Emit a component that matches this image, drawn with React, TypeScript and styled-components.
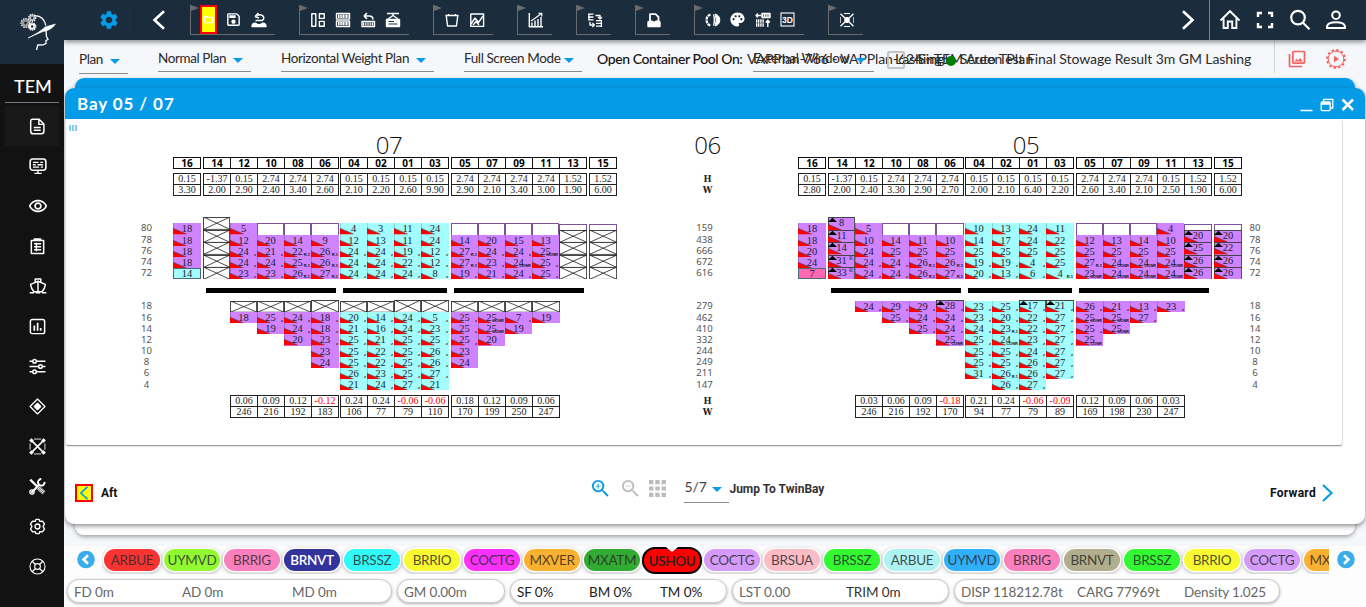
import React from "react";
import styled, { createGlobalStyle, css } from "styled-components";
import {
  MdSettings,
  MdPalette,
  MdFolderOpen,
  MdZoomIn,
  MdZoomOut,
  MdOutlineSave,
  MdOutlinePhotoLibrary,
  MdOutlineRemoveRedEye,
} from "react-icons/md";

const BLUE = "#059be7";
const NAVY = "#1b2c3d";
const VIOLET = "#cf83ff";
const AQUA = "#a3fdfd";
const PINK = "#ff69b4";

const Global = createGlobalStyle`
  html, body { margin: 0; padding: 0; overflow: hidden; background: #f5f7fa; }
  *, *::before, *::after { box-sizing: border-box; }
  svg { display: block; flex: none; }
`;

const Screen = styled.div`
  display: flex;
  width: 1366px;
  height: 607px;
  overflow: hidden;
  font-family: Lato, "Liberation Sans", sans-serif;
  color: #222;
`;

/* ---------- sidebar ---------- */

const Sidebar = styled.nav`
  width: 64px;
  flex: none;
  background: #121212;
  color: #fff;
  z-index: 3;
`;

const LogoBox = styled.div`
  height: 64px;
  background: ${NAVY};
`;

const ModuleName = styled.div`
  height: 39px;
  margin: 0 5px;
  padding: 11px 0 0 9px;
  border-bottom: 1px solid #6f7780;
  font: 500 18px/22px Lato, sans-serif;
`;

const SideItem = styled.div<{ $active?: boolean }>`
  display: flex;
  align-items: center;
  justify-content: center;
  height: 40px;
  margin: 0 5px;
  padding-left: 11px;
  background: ${(p) => (p.$active ? "#191919" : "transparent")};
`;

const SideList = styled.div`
  padding-top: 3px;
`;

/* ---------- top bar ---------- */

const Main = styled.div`
  display: flex;
  flex-direction: column;
  flex: 1;
  min-width: 0;
  background: #f5f7fa;
`;

const TopBar = styled.header`
  display: flex;
  align-items: center;
  height: 40px;
  flex: none;
  background: ${NAVY};
  color: #fff;
  box-shadow: 0 2px 5px rgba(0, 0, 0, 0.45);
  z-index: 2;
`;

const GearCell = styled.div`
  display: flex;
  justify-content: center;
  width: 70px;
  padding-left: 20px;
  height: 30px;
  align-items: center;
  border-right: 1px solid #182635;
  color: ${BLUE};
`;

const ChevronCell = styled.div<{ $w: number }>`
  display: flex;
  justify-content: center;
  width: ${(p) => p.$w}px;
`;

const Groups = styled.div`
  display: flex;
  gap: 24px;
  flex: 1;
  padding-left: 7px;
`;

const ToolGroup = styled.div`
  position: relative;
  display: flex;
  align-items: center;
  height: 30px;
  padding: 0 4px 0 5px;
  border-left: 1px solid #6b6b6b;
  border-bottom: 1px solid #6b6b6b;
`;

const Flag = styled.span`
  position: absolute;
  left: 0;
  top: 0;
  border-left: 8px solid #6b6b6b;
  border-top: 3px solid transparent;
  border-bottom: 3px solid transparent;
`;

const Tool = styled.div<{ $hot?: boolean }>`
  display: flex;
  align-items: center;
  justify-content: center;
  width: 25px;
  height: 28px;
  ${(p) =>
    p.$hot &&
    css`
      width: 17px;
      height: 29px;
      margin: 0 4px;
      border: 2px solid red;
      background: #ff0;
      overflow: hidden;
    `}
`;

const UserTools = styled.div`
  display: flex;
  align-items: center;
  width: 157px;
  height: 40px;
  gap: 13px;
  padding-left: 9px;
  border-left: 1px solid #7b838b;
`;

/* ---------- options bar ---------- */

const Options = styled.div`
  position: relative;
  display: flex;
  height: 38px;
  flex: none;
  padding: 0 15px;
  gap: 30px;
  color: #222;
`;

const Select = styled.div<{ $w: number; $y?: number }>`
  display: flex;
  justify-content: space-between;
  align-items: center;
  width: ${(p) => p.$w}px;
  height: ${(p) => 32 + (p.$y || 0)}px;
  padding: 4px 8px 0 0;
  border-bottom: 1px solid #8a8a8a;
  font-size: 13.5px;
  letter-spacing: -0.4px;
  white-space: nowrap;
  color: #2b2b2b;
`;

const Caret = styled.i`
  margin-top: 6px;
  border: 5px solid transparent;
  border-top-color: ${BLUE};
  border-bottom: 0;
`;

const Overlay = styled.div<{ $x: number; $y: number; $ls?: number; $bold?: boolean }>`
  position: absolute;
  left: ${(p) => p.$x - 64}px;
  top: ${(p) => p.$y - 40}px;
  font-size: 14px;
  line-height: 18px;
  white-space: nowrap;
  color: ${(p) => (p.$bold ? "#111" : "#2b2b2b")};
  font-weight: ${(p) => (p.$bold ? 500 : 400)};
  letter-spacing: ${(p) => p.$ls || 0}px;
`;

const CheckBox = styled.span`
  display: block;
  width: 18px;
  height: 18px;
  border: 2px solid #c4c4c4;
  border-radius: 2px;
`;

const Dot = styled.span`
  display: block;
  width: 10px;
  height: 10px;
  border-radius: 50%;
  background: #008000;
`;

const OptionTools = styled.div`
  position: absolute;
  right: 19px;
  top: 1px;
  display: flex;
  align-items: center;
  height: 32px;
  gap: 19px;
  padding: 3px 1px 0 12px;
  border-left: 1px solid #d4d4d4;
  color: #f5625d;
`;

/* ---------- window ---------- */

const BackWindow = styled.section`
  height: 457px;
  flex: none;
  margin: 0 11px;
  padding-top: 10px;
  border-radius: 9px;
  background: linear-gradient(${BLUE} 40px, #fff 40px);
  box-shadow: 0 2px 4px rgba(0, 0, 0, 0.35);
`;

const FrontWindow = styled.section`
  height: 436px;
  margin: 0 -10px;
  border-radius: 9px;
  background: #fff;
  box-shadow: 0 2px 5px rgba(0, 0, 0, 0.45);
  overflow: hidden;
`;

const TitleBar = styled.div`
  display: flex;
  align-items: center;
  height: 31px;
  padding: 1px 10px 0 12px;
  background: ${BLUE};
  color: #fff;
`;

const Title = styled.h1`
  flex: 1;
  margin: 0;
  font: 700 17px/22px Lato, sans-serif;
  letter-spacing: 0.9px;
`;

const WindowButtons = styled.div`
  display: flex;
  align-items: center;
  gap: 7px;
  padding-top: 2px;
`;

const PlanCard = styled.div`
  position: relative;
  display: flex;
  width: 1278px;
  height: 327px;
  border: 1px solid #e0e0e0;
  border-top: 0;
  border-bottom: 1px solid #9e9e9e;
  border-radius: 4px;
  box-shadow: 0 1px 1px rgba(0, 0, 0, 0.12);
`;

const Grip = styled.svg`
  position: absolute;
  left: 3px;
  top: 6px;
`;

const Tiers = styled.div<{ $w: number; $pl?: number; $pt?: number }>`
  width: ${(p) => p.$w}px;
  padding-left: ${(p) => p.$pl || 0}px;
  padding-top: ${(p) => p.$pt ?? 103.4}px;
  text-align: center;
  font: 400 9.6px/11.2px "Noto Sans", sans-serif;
  color: #555;
`;

const TierBlock = styled.div<{ $gap?: number }>`
  margin-top: ${(p) => p.$gap || 0}px;
  div {
    height: 11.2px;
  }
`;

const Middle = styled.div`
  position: relative;
  width: 181px;
`;

const MidLabel = styled.div<{ $y: number }>`
  position: absolute;
  left: 0;
  width: 100%;
  top: ${(p) => p.$y - 119}px;
  text-align: center;
  font: 700 9.5px/12px "DejaVu Serif Condensed", "DejaVu Serif", serif;
  color: #222;
`;

const BayTitle = styled.div<{ $dx?: number }>`
  height: 38px;
  padding-top: 10px;
  text-align: center;
  transform: translateX(${(p) => p.$dx || 0}px);
  font: 300 24px/32px "Open Sans", "Noto Sans", sans-serif;
  letter-spacing: -0.4px;
  color: #111;
`;

const Bay = styled.div`
  width: 444px;
`;

const Strip = styled.div<{ $mt?: number }>`
  display: flex;
  margin-top: ${(p) => p.$mt || 0}px;
`;

const Block = styled.div<{ $ml: number }>`
  display: flex;
  align-items: flex-end;
  margin-left: ${(p) => p.$ml}px;
`;

const HeadCell = styled.div<{ $last: boolean }>`
  width: ${(p) => (p.$last ? 28 : 27)}px;
  height: 12px;
  border: 1px solid #111;
  border-right-width: ${(p) => (p.$last ? 1 : 0)}px;
  text-align: center;
  font: 700 10px/10px "Noto Sans", sans-serif;
  color: #000;
`;

const ValCell = styled.div<{ $last: boolean; $red?: boolean; $bottom?: boolean }>`
  width: ${(p) => (p.$last ? 28 : 27)}px;
  height: ${(p) => (p.$bottom ? 12 : 11)}px;
  border: 1px solid #222;
  border-bottom-width: ${(p) => (p.$bottom ? 1 : 0)}px;
  border-right-width: ${(p) => (p.$last ? 1 : 0)}px;
  text-align: center;
  font: 400 10px/9.5px "Liberation Serif", serif;
  color: ${(p) => (p.$red ? "#f00" : "#222")};
`;

const Stack = styled.div<{ $last: boolean; $h: number; $up?: boolean; $lift?: boolean }>`
  display: flex;
  flex-direction: column;
  justify-content: ${(p) => (p.$up ? "flex-end" : "flex-start")};
  width: ${(p) => (p.$last ? 28 : 27)}px;
  height: ${(p) => p.$h + (p.$lift ? 1.2 : 0)}px;
  margin-top: ${(p) => (p.$lift ? -1.2 : 0)}px;
`;

type Kind = "box" | "open" | "cross" | "plain";

const Slot = styled.div<{ $h: number; $bg: string; $line: string; $tall: boolean; $kind: Kind }>`
  position: relative;
  height: ${(p) => p.$h}px;
  flex: none;
  background: ${(p) => p.$bg};
  box-shadow: ${(p) =>
    p.$tall
      ? "inset 1px 0 #444, inset 0 1px #444, inset -1px 0 #555"
      : p.$kind === "open"
        ? "inset 0 1px #7c529b, inset 1px 0 #7c529b, inset -1px 0 #7c529b"
        : p.$kind === "plain"
          ? "inset 0 0 0 1px #4b6c7c"
          : `inset 1px 0 ${p.$line}`};
  text-align: center;
  font: 400 10.5px/11px "Liberation Serif", serif;
  color: #1c1c2c;
`;

const Mark = styled.svg`
  position: absolute;
  left: 0;
  bottom: 0;
`;

const Num = styled.span`
  position: relative;
`;

const Note = styled.span`
  position: absolute;
  right: 1px;
  bottom: 0;
  font: 700 4px/5px "Liberation Sans", sans-serif;
  color: #111;
`;

const Flagged = styled.span`
  position: absolute;
  right: 2px;
  top: 0;
  font: 400 6px/7px "Liberation Serif", serif;
  color: #333;
`;

const Hatches = styled.div`
  display: flex;
  height: 5px;
  margin-top: 9px;
  padding-left: 33px;
`;

const Hatch = styled.div<{ $w: number; $mr?: number }>`
  width: ${(p) => p.$w}px;
  margin-right: ${(p) => p.$mr || 0}px;
  background: #000;
`;

const notes: Record<string, string> = { z: "z", r: "R.1", c: "CONR" };

function Container({ code, bay }: { code: string; bay: string }) {
  const tall = /^\^|^T/.test(code);
  const h = tall ? 12.4 : 11.2;
  const colour = bay === "v" ? VIOLET : AQUA;
  const line = bay === "v" ? "#a76cd0" : "#83d3d8";
  if (code === "h")
    return <Slot $h={6.2} $bg="#fff" $line={line} $tall={false} $kind="open" />;
  if (code === "-")
    return <Slot $h={11.2} $bg="#fff" $line={line} $tall={false} $kind="open" />;
  if (code === "X" || code === "TX")
    return (
      <Slot $h={h} $bg="#fff" $line="#333" $tall $kind="cross">
        <Mark width="100%" height="100%" viewBox="0 0 27 12" preserveAspectRatio="none">
          <path d="M0.5 0L27 12M27 0L0.5 12M0 12H27" stroke="#222" strokeWidth="0.8" fill="none" />
        </Mark>
      </Slot>
    );
  if (code[0] === "=" || code[0] === "#")
    return (
      <Slot $h={h} $bg={code[0] === "=" ? AQUA : PINK} $line={line} $tall={false} $kind="plain">
        <Num>{code.slice(1)}</Num>
      </Slot>
    );
  const m = code.match(/^(\^?)(\d+)([zrcR]?)$/)!;
  return (
    <Slot $h={h} $bg={colour} $line={line} $tall={tall} $kind="box">
      <Mark width="15" height="6.2" viewBox="0 0 15 6.2">
        <path d="M0 0.5L13.6 6.2H0Z" fill="#f00" />
        <path d="M0 0.3L13.6 6" stroke="#222" strokeWidth="0.5" />
      </Mark>
      {tall && (
        <Mark width="10" height="12.4" viewBox="0 0 10 12.4">
          <path d="M0 5L4.5 0.8L9 5Z" fill="#000" />
        </Mark>
      )}
      <Num>{m[2]}</Num>
      {m[3] === "R" && <Flagged>R</Flagged>}
      {notes[m[3]] && <Note>{notes[m[3]]}</Note>}
    </Slot>
  );
}

interface BayData {
  title: string;
  dx: number;
  h: string;
  w: string;
  deck: string[];
  hold: string[];
  holdH: string;
  holdW: string;
}

const HEADS = "16|14 12 10 08 06|04 02 01 03|05 07 09 11 13|15";
const GAPS = [0, 2, 1, 2, 2];
const HOLD_GAPS = [57, 1, 2];

const split = (s: string) => s.split("|").map((g) => g.trim().split(" "));

const isAlert = (v: string, gaps: number[]) => gaps === HOLD_GAPS && v[0] === "-";

function Values({ data, gaps, bottom, mt }: { data: string; gaps: number[]; bottom?: boolean; mt?: number }) {
  return (
    <Strip $mt={mt}>
      {split(data).map((g, i) => (
        <Block key={i} $ml={gaps[i]}>
          {g.map((v, j) => (
            <ValCell key={j} $last={j === g.length - 1} $bottom={bottom} $red={isAlert(v, gaps)}>
              {v}
            </ValCell>
          ))}
        </Block>
      ))}
    </Strip>
  );
}

function Stacks({ groups, gaps, h, up, mt }: { groups: string[]; gaps: number[]; h: number; up?: boolean; mt?: number }) {
  return (
    <Strip $mt={mt}>
      {groups.map((g, i) => {
        const cols = g.split("|");
        const tone = (up ? i === 2 : i === 1) ? "a" : "v";
        return (
          <Block key={i} $ml={gaps[i]}>
            {cols.map((c, j) => (
              <Stack key={j} $last={j === cols.length - 1} $h={h} $up={up} $lift={!up && /^[T^]/.test(c)}>
                {c.split(" ").map((code, k) => (
                  <Container key={k} code={code} bay={tone} />
                ))}
              </Stack>
            ))}
          </Block>
        );
      })}
    </Strip>
  );
}

function BayPlan({ d }: { d: BayData }) {
  return (
    <Bay>
      <BayTitle $dx={d.dx}>{d.title}</BayTitle>
      <Strip>
        {split(HEADS).map((g, i) => (
          <Block key={i} $ml={GAPS[i]}>
            {g.map((v, j) => (
              <HeadCell key={j} $last={j === g.length - 1}>
                {v}
              </HeadCell>
            ))}
          </Block>
        ))}
      </Strip>
      <Values data={d.h} gaps={GAPS} mt={4} />
      <Values data={d.w} gaps={GAPS} bottom />
      <Stacks groups={d.deck} gaps={GAPS} h={62} up mt={21.4} />
      <Hatches>
        <Hatch $w={130} $mr={7} />
        <Hatch $w={104} $mr={7} />
        <Hatch $w={130} />
      </Hatches>
      <Stacks groups={d.hold} gaps={HOLD_GAPS} h={94.2} mt={7.4} />
      <Values data={d.holdH} gaps={HOLD_GAPS} />
      <Values data={d.holdW} gaps={HOLD_GAPS} bottom />
    </Bay>
  );
}

const bay07: BayData = {
  title: "07",
  dx: -6,
  h: "0.15|-1.37 0.15 2.74 2.74 2.74|0.15 0.15 0.15 0.15|2.74 2.74 2.74 2.74 1.52|1.52",
  w: "3.30|2.00 2.90 2.40 3.40 2.60|2.10 2.20 2.60 9.90|2.90 2.10 3.40 3.00 1.90|6.00",
  deck: [
    "18 18 18 18 =14",
    "TX TX TX TX TX|5 12 24z 24z 23z|- 20 21z 24z 23z|- 14 22r 25r 26r|- 9 26r 26r 27r",
    "4 12 24z 24z 24z|3 13 24z 24z 24z|11 11 19z 22z 24z|24 24 12z 12z 8z",
    "- 14 27r 27r 19z|- 20 24z 23z 21z|- 15 24z 24c 24z|- 13 25c 25z 25z|h TX TX TX TX",
    "h TX TX TX TX",
  ],
  hold: [
    "X 18|X 25z 19|X 24z 24z 20|TX 18z 18z 23z 23 24",
    "X 20z 21z 25z 25z 25z 26z 21|X 14z 16z 21z 22z 22z 23z 24z|TX 24z 24z 25z 25z 25z 25z 27z|TX 5z 23z 25z 26z 26z 27z 21",
    "X 25z 25z 25z 23 24|X 25c 25c 20|X 7z 19|X 19",
  ],
  holdH: "0.06 0.09 0.12 -0.12|0.24 0.24 -0.06 -0.06|0.18 0.12 0.09 0.06",
  holdW: "246 216 192 183|106 77 79 110|170 199 250 247",
};

const bay05: BayData = {
  title: "05",
  dx: 6,
  h: "0.15|-1.37 0.15 2.74 2.74 2.74|0.15 0.15 0.15 0.15|2.74 2.74 2.74 0.15 1.52|1.52",
  w: "2.80|2.00 2.40 3.30 2.90 2.70|2.00 2.10 6.40 2.20|2.60 3.40 2.10 2.50 1.90|6.00",
  deck: [
    "18 18 20 24 #7",
    "^8 ^11 ^14 ^31R ^33R|5 10 24 24z 24z|- 14 25 24z 24z|- 11 25 26r 26r|- 10 25 26r 27r",
    "10 14 25 19z 20z|13 17 25 19z 13z|24 24 25 4z 6z|11 22 25 25 4r",
    "- 12 25 27r 23c|- 13 25 24c 24c|- 14 25 24c 24c|4 10 25 24c 24c|h ^20 ^25 ^26 ^26",
    "h ^20 ^22 ^26 ^26",
  ],
  hold: [
    "24z|29z 25z|29z 24z 25z|^28z 24z 24z 25c",
    "23z 23z 24z 25z 25z 25z 31z|25z 20z 23r 24c 25z 25z 26r 26z|^17z 22z 22z 23z 24z 26z 26z 27z|^21z 27z 27z 27z 27z 27z 27z",
    "26z 25c 25z 25c|21z 25c 25c|13z 27z|23z",
  ],
  holdH: "0.03 0.06 0.09 -0.18|0.21 0.24 -0.06 -0.09|0.12 0.09 0.06 0.03",
  holdW: "246 216 192 170|94 77 79 89|169 198 230 247",
};

const DECK_TIERS = [80, 78, 76, 74, 72];
const HOLD_TIERS = [18, 16, 14, 12, 10, 8, 6, 4];

function TierScale({ deck, hold }: { deck: number[]; hold: number[] }) {
  return (
    <>
      <TierBlock>{deck.map((t) => <div key={t}>{t}</div>)}</TierBlock>
      <TierBlock $gap={22}>{hold.map((t) => <div key={t}>{t}</div>)}</TierBlock>
    </>
  );
}

/* ---------- window footer ---------- */

const Footer = styled.div`
  display: flex;
  align-items: center;
  height: 78px;
  padding: 15px 31px 0 10px;
  font: 700 12px/16px Roboto, sans-serif;
  color: #111;
`;

const AftButton = styled.div`
  display: flex;
  align-items: center;
  justify-content: center;
  width: 18px;
  height: 18px;
  margin: 0 8px 0 0;
  border: 2px solid red;
  background: #ff0;
`;

const ZoomTools = styled.div`
  display: flex;
  align-items: center;
  gap: 7px;
  height: 40px;
  margin: -9px 0 0 472px;
  color: #bdbdbd;
`;

const PageSelect = styled.div`
  display: flex;
  align-items: center;
  justify-content: space-between;
  width: 45px;
  height: 28px;
  margin: -7px 0 0 18px;
  padding: 0 7px 4px 0;
  border-bottom: 1px solid #8a8a8a;
  font: 400 14px/20px Lato, sans-serif;
  color: #444;
`;

const Jump = styled.div`
  flex: 1;
  padding-bottom: 7px;
  color: #333;
`;

const Forward = styled.div`
  display: flex;
  align-items: center;
  gap: 5px;
  letter-spacing: 0.3px;
`;

/* ---------- ports and status ---------- */

const Bottom = styled.footer`
  flex: 1;
  margin-top: 11px;
  padding-left: 3px;
  background: #fdfdfe;
`;

const Ports = styled.div`
  display: flex;
  align-items: center;
  height: 28px;
  padding: 0 11px 0 10px;
`;

const PortTrack = styled.div`
  display: flex;
  align-items: center;
  gap: 4px;
  width: 1228px;
  height: 28px;
  margin: 0 8px 0 7px;
  padding-left: 2px;
  overflow: hidden;
`;

const Port = styled.div<{ $c: string; $fg?: string; $sel?: boolean }>`
  position: relative;
  flex: none;
  width: 56px;
  height: 22px;
  border-radius: 11px;
  background: ${(p) => p.$c};
  color: ${(p) => p.$fg || "rgba(40,40,40,.82)"};
  box-shadow: 0 0 0 1.5px #fff, 0 1px 4px 1px rgba(0, 0, 0, 0.35);
  font: ${(p) => (p.$fg ? 600 : 400)} 13.5px/23px Lato, sans-serif;
  letter-spacing: -0.3px;
  text-align: center;
  ${(p) =>
    p.$sel &&
    css`
      width: 60px;
      height: 27px;
      margin: 0 -2px;
      border: 2px solid #000;
      border-radius: 13px;
      line-height: 25px;
      box-shadow: none;
    `}
`;

const Notch = styled.span`
  position: absolute;
  left: 22px;
  top: -2px;
  border: 6px solid transparent;
  border-top: 5px solid #fff;
  border-bottom: 0;
`;

const Status = styled.div`
  display: flex;
  gap: 5px;
  margin-top: 5px;
`;

const StatusBox = styled.div<{ $w: number; $dark?: boolean }>`
  display: flex;
  width: ${(p) => p.$w}px;
  height: 24px;
  padding-left: 6px;
  border: 1px solid #ccc;
  border-radius: 12px;
  background: #fff;
  box-shadow: 0 1px 3px rgba(0, 0, 0, 0.3);
  font-size: 13.5px;
  line-height: 24px;
  letter-spacing: -0.1px;
  white-space: nowrap;
  color: ${(p) => (p.$dark ? "#222" : "#666")};
`;

const Stat = styled.span<{ $w: number; $dark?: boolean }>`
  width: ${(p) => p.$w}px;
  flex: none;
  ${(p) => p.$dark && "color:#333;"}
`;

const ports: [string, string, string?][] = [
  ["ARBUE", "#f93232"],
  ["UYMVD", "#92f932"],
  ["BRRIG", "#f97fbd"],
  ["BRNVT", "#33339b", "#fff"],
  ["BRSSZ", "#32f9f9"],
  ["BRRIO", "#f9f932"],
  ["COCTG", "#f932f9"],
  ["MXVER", "#f9b132"],
  ["MXATM", "#32ab32"],
  ["USHOU", "#f00", "#222"],
  ["COCTG", "#d49bfb"],
  ["BRSUA", "#fabdc8"],
  ["BRSSZ", "#32f932"],
  ["ARBUE", "#aef2f2"],
  ["UYMVD", "#32aff9"],
  ["BRRIG", "#f97fbd"],
  ["BRNVT", "#b0ae8c"],
  ["BRSSZ", "#32f932"],
  ["BRRIO", "#f9f932"],
  ["COCTG", "#d49bfb"],
  ["MXVER", "#f9b132"],
];

/* ---------- drawings ---------- */

const Ic = ({ s = 16, w = 1.4, children }: { s?: number; w?: number; children: React.ReactNode }) => (
  <svg width={s} height={s} viewBox="0 0 16 16" fill="none" stroke="currentColor" strokeWidth={w} strokeLinejoin="round">
    {children}
  </svg>
);

const Chevron = ({ d, w = 14, h = 20, c = "#fff", sw = 2.6 }: { d: "l" | "r"; w?: number; h?: number; c?: string; sw?: number }) => (
  <svg width={w} height={h} viewBox="0 0 14 20" fill="none" stroke={c} strokeWidth={sw}>
    <path d={d === "l" ? "M12 1.2L2.5 10L12 18.8" : "M2 1.2L11.5 10L2 18.8"} />
  </svg>
);

const Logo = () => (
  <svg width="64" height="64" viewBox="0 0 64 64" fill="none" stroke="#fff">
    <circle cx="25.5" cy="23" r="2.6" strokeWidth="2.4" stroke="#999" />
    <circle cx="25.5" cy="23" r="4.4" strokeWidth="1.2" strokeDasharray="1.6 .9" />
    <circle cx="32.2" cy="17.8" r="2.2" strokeWidth="2" stroke="#bbb" />
    <circle cx="32.2" cy="17.8" r="3.6" strokeWidth="1.1" strokeDasharray="1.4 .9" />
    <circle cx="32.2" cy="26.5" r="2.3" strokeWidth="2" />
    <circle cx="32.2" cy="26.5" r="3.7" strokeWidth="1.1" strokeDasharray="1.4 .9" />
    <path d="M35 15.6C40.5 15.8 44.5 19 45.8 25.5" strokeWidth="1.3" />
    <path d="M28 38C36 34 41 31 45 27L55.5 24Q51 30.5 43 31.5Q36 34.5 28 38Z" fill="#fff" strokeWidth=".6" />
    <path d="M46 31L46.5 36.5L48 39.5L46 40.5V43.5L43 44.8L37.8 45L36.5 50" strokeWidth="1.3" />
  </svg>
);

const sideIcons: React.ReactNode[] = [
  <Ic s={17} key="doc"><path d="M3.5 1.2H9.5L14 5.7V12.5Q14 14.8 11.7 14.8H3.8Q1.6 14.8 1.6 12.5V3.2Q1.6 1.2 3.5 1.2ZM9.3 1.2V6H14M4.5 9H11M4.5 11.6H11" /></Ic>,
  <Ic s={18} key="mon"><rect x="1" y="1.8" width="14" height="10" rx="2.4" /><path d="M3.5 4.8H8.5M10 4.8H12.5M3.5 6.9H6M7.5 6.9H12.5M3.5 9H9M10.5 9H12.5M8 12V14.5M4.8 14.6H11.2" strokeWidth="1.2" /></Ic>,
  <MdOutlineRemoveRedEye key="eye" size={20} />,
  <Ic s={17} key="clip"><path d="M2.2 2.4H13.8V14.6H2.2ZM5 2V1H11V2M4.8 5.5H11.5M4.8 8.3H11.5M4.8 11.1H11.5M7 4.5V12.5" /></Ic>,
  <Ic s={18} key="ship"><path d="M8 3.8L14.6 6.6Q14 11 11.5 13.2H4.5Q2 11 1.4 6.6ZM8 3.8V13M5.5 4.5V1.8H10.5V4.5M0.6 14H4.5M6 14H10M11.5 14H15.4" strokeWidth="1.3" /></Ic>,
  <Ic s={17} key="chart"><rect x="1.3" y="1.3" width="13.4" height="13.4" rx="1.8" /><path d="M5 12V7M8.1 12V4.5M11 12V9.5" strokeWidth="1.6" /></Ic>,
  <Ic s={17} key="sl"><path d="M0.5 3H3.5M7 3H15.5M0.5 8H9M12.6 8H15.5M0.5 13H3.5M7 13H15.5" /><circle cx="5.2" cy="3" r="1.7" /><circle cx="10.8" cy="8" r="1.7" /><circle cx="5.2" cy="13" r="1.7" /></Ic>,
  <Ic s={17} key="dia" w={1.2}><path d="M8 1L15 8L8 15L1 8Z" /><path d="M8 5L11 8L8 11L5 8Z" fill="currentColor" /></Ic>,
  <Ic s={17} key="x"><path d="M1.5 1.5L14.5 14.5M14.5 1.5L1.5 14.5" strokeWidth="1.5" /><path d="M4.5 1H11.5M4.5 15H11.5M1 5V11M15 5V11" strokeWidth="0.8" /><path d="M1.2 1.2L3.4 3.4M14.8 1.2L12.6 3.4M1.2 14.8L3.4 12.6M14.8 14.8L12.6 12.6" strokeWidth="3" /></Ic>,
  <Ic s={17} key="tools"><path d="M1.2 1.5L8 8.2" strokeWidth="2.2" /><path d="M9 9.2L14 14" strokeWidth="4" strokeDasharray="0.9 0.4" /><path d="M2.2 13.8L10.2 5.8" strokeWidth="2" /><path d="M14.6 3.6A3.1 3.1 0 1 1 11.6 1" strokeWidth="1.8" /><circle cx="2.8" cy="13.2" r="2" strokeWidth="1.3" /></Ic>,
  <Ic s={17} key="gear" w={1.3}><path d="M6.5 1.3H9.5L10.2 3.2L12.6 2.9L14.6 5.6L13.2 8L14.6 10.4L12.6 13.1L10.2 12.8L9.5 14.7H6.5L5.8 12.8L3.4 13.1L1.4 10.4L2.8 8L1.4 5.6L3.4 2.9L5.8 3.2Z" /><circle cx="8" cy="8" r="2.3" /></Ic>,
  <Ic s={17} key="buoy" w={1}><circle cx="8" cy="8" r="7.1" /><circle cx="8" cy="8" r="2.7" /><path d="M3 3L6 6M13 3L10 6M3 13L6 10M13 13L10 10" strokeWidth="1.3" /></Ic>,
];

const Lines = ({ y }: { y: number }) => (
  <>
    <rect x="1.5" y={y} width="13" height="5.6" />
    <path d={`M3 ${y + 2.8}H13.5`} strokeWidth="3.5" strokeDasharray="1.2 .4" />
  </>
);

const toolGroups: React.ReactNode[][] = [
  [
    <MdFolderOpen key="a" size={11} />,
    <MdOutlineSave key="b" size={17} />,
    <Ic key="c"><path d="M1 14.5Q1 11 4.5 11.2Q8 14 11.5 11.2Q15 11 15 14.5Z" fill="currentColor" /><path d="M4.5 8.5H11Q13.5 7.5 12.5 4.5Q10 1.5 6 3.5M4 4.5L7.5 1M4 4.5L8 6" /></Ic>,
  ],
  [
    <Ic key="a"><rect x="1.8" y="1.8" width="4" height="12.4" /><rect x="9.4" y="1.8" width="4.8" height="4.6" /><rect x="9.4" y="9.4" width="4.8" height="4.8" /></Ic>,
    <Ic key="b"><Lines y={1.5} /><Lines y={9} /></Ic>,
    <Ic key="c"><path d="M2 9.5H14.5V14.5H2Z" /><path d="M3 12H14" strokeWidth="3" strokeDasharray="1 .8" /><path d="M4 4H9Q13 4 13 7.5M4 4L7 1.2M4 4L7 6.8" strokeWidth="1.6" /></Ic>,
    <Ic key="d"><path d="M2 1.5H14M8 1.5V4M3 7L8 3.5L13 7" /><path d="M1.5 7.5H14.5V14.5H1.5Z" fill="currentColor" /><path d="M3.5 9.5H9M3.5 12H12.5" stroke={NAVY} strokeWidth="1" /></Ic>,
  ],
  [
    <Ic key="a"><path d="M1.5 3.5H14.5M2.2 3.5L3.6 14H12.4L13.8 3.5M4.6 3.5V2M11.4 3.5V2" /></Ic>,
    <Ic key="b"><rect x="1.8" y="2" width="12.8" height="12.4" /><path d="M2 12L6 6L9.5 10.5L14 4M4 13L7 9.5L10 13" /></Ic>,
  ],
  [<Ic key="a"><path d="M1.3 1V14.7H15M4 14V10.5M7 14V8.5M10 14V7M13 14V5" /><path d="M3 9L8 5.5L13.5 1.5M10.5 1.3H13.8V4.5" strokeWidth="1.2" /></Ic>],
  [<Ic key="a"><path d="M1 2.2H6.5M1 5H6.5M1 7.8H6.5M2 1.5V8.5M9 8.6H15M9 11.4H15M9 14.2H15M14.4 8V15" strokeWidth="1.3" /><path d="M8.5 3.5H13V6.5M3 10V13H7" /><path d="M11 5L13 7L15 5M5.4 11L7.4 13L5.4 15" strokeWidth="1.2" /></Ic>],
  [<Ic key="a"><path d="M4 9V2.2H9.5L12.5 5V9" strokeWidth="1.8" /><path d="M2 10Q5 7.5 8 10.5Q11 7.5 14 10V14.5H2Z" fill="currentColor" /></Ic>],
  [
    <Ic key="a"><path d="M5.4 2.4Q1.6 4 1.6 8T5.4 13.6" strokeWidth="2.2" strokeDasharray="3 .7" /><path d="M10 2Q14.8 3.5 14.8 8T10 14Q12.6 8 10 2ZM8.6 2.2Q11 8 8.6 13.8" fill="currentColor" strokeWidth="1" /></Ic>,
    <MdPalette key="b" size={17} />,
    <Ic key="c"><rect x="7" y="1.5" width="8" height="4" /><path d="M7 3.5H15" strokeWidth="4" strokeDasharray="1.2 .6" /><path d="M1 9H9M1 13H9" strokeWidth="3.4" strokeDasharray="1.2 .6" /><path d="M6 3.5H1M3 1.5L1 3.5L3 5.5M12.8 15V8.5M10.8 10.5L12.8 8.2L14.8 10.5" /></Ic>,
    <svg key="d" width="15" height="15" viewBox="0 0 15 15"><rect x="1" y="1" width="13" height="13" fill="none" stroke="#fff" strokeWidth="1.1" /><text x="7.5" y="10.6" fontSize="8.5" fontFamily="Liberation Sans, sans-serif" fontWeight="700" fill="#fff" textAnchor="middle">3D</text></svg>,
  ],
  [<Ic key="a"><path d="M1.5 1.8L14.5 14.2M14.5 1.8L1.5 14.2" strokeWidth="1.4" /><path d="M5 1.5H11M5 14.5H11" strokeWidth="1" /><path d="M1.5 5V11M14.5 5V11" strokeWidth="0.7" /><path d="M8 5V11M5.3 8H10.7" strokeWidth="3" /></Ic>],
];

const RoundArrow = ({ d }: { d: "l" | "r" }) => (
  <svg width="18" height="18" viewBox="0 0 18 18">
    <circle cx="9" cy="8.5" r="8.8" fill="#39aeea" />
    <path d={d === "l" ? "M11 4.3L6.6 8.5L11 12.7" : "M7 4.3L11.4 8.5L7 12.7"} fill="none" stroke="#fff" strokeWidth="2.6" />
  </svg>
);

export default function App() {
  return (
    <>
      <Global />
      <Screen>
        <Sidebar>
          <LogoBox><Logo /></LogoBox>
          <ModuleName>TEM</ModuleName>
          <SideList>
            {sideIcons.map((icon, i) => (
              <SideItem key={i} $active={i === 0}>{icon}</SideItem>
            ))}
          </SideList>
        </Sidebar>
        <Main>
          <TopBar>
            <GearCell><MdSettings size={22} /></GearCell>
            <ChevronCell $w={49}><Chevron d="l" /></ChevronCell>
            <Groups>
              {toolGroups.map((g, i) => (
                <ToolGroup key={i}>
                  <Flag />
                  {g.map((icon, j) => (
                    <Tool key={j} $hot={i === 0 && j === 0}>{icon}</Tool>
                  ))}
                </ToolGroup>
              ))}
            </Groups>
            <ChevronCell $w={43}><Chevron d="r" /></ChevronCell>
            <UserTools>
              <svg width="22" height="22" viewBox="0 0 22 22" fill="none" stroke="#fff" strokeWidth="1.9">
                <path d="M1.5 11.5L11 2.2L20.5 11.5M4.6 9.5V19H8.8V12.5H13.2V19H17.4V9.5" />
              </svg>
              <svg width="22" height="22" viewBox="0 0 22 22" fill="none" stroke="#fff" strokeWidth="2.4">
                <path d="M4 8V4H8M14 4H18V8M18 14V18H14M8 18H4V14" />
              </svg>
              <svg width="22" height="22" viewBox="0 0 22 22" fill="none" stroke="#fff" strokeWidth="2.2">
                <circle cx="9" cy="8.6" r="6.8" />
                <path d="M14 13.8L20.5 20.2" />
              </svg>
              <svg width="22" height="22" viewBox="0 0 22 22" fill="none" stroke="#fff" strokeWidth="2">
                <circle cx="12" cy="6.2" r="3.8" />
                <path d="M3 19V17.5Q3.7 13.3 12 13.3T21 17.5V19Z" />
              </svg>
            </UserTools>
          </TopBar>
          <Options>
            <Select $w={49} $y={2}>Plan<Caret /></Select>
            <Select $w={93}>Normal Plan<Caret /></Select>
            <Select $w={153}>Horizontal Weight Plan<Caret /></Select>
            <Select $w={118}>Full Screen Mode<Caret /></Select>
            <Overlay $x={597} $y={50} $ls={-0.42} $bold>Open Container Pool On:</Overlay>
            <Overlay $x={747} $y={50} $ls={-0.08}>VAPPlan-766 - VAPPlan-624 - TEM Auto Test Final Stowage Result 3m GM Lashing</Overlay>
            <Overlay $x={753} $y={40}><Select $w={121}>External Window<Caret /></Select></Overlay>
            <Overlay $x={887} $y={51}><CheckBox /></Overlay>
            <Overlay $x={895} $y={50}>Lashing</Overlay>
            <Overlay $x={918} $y={50} $ls={0.2}>Single Screen Plan</Overlay>
            <Overlay $x={946} $y={56}><Dot /></Overlay>
            <OptionTools>
              <MdOutlinePhotoLibrary size={20} />
              <svg width="20" height="20" viewBox="0 0 20 20" fill="none" stroke="currentColor">
                <circle cx="10" cy="10" r="7.8" strokeWidth="1" />
                <circle cx="10" cy="10" r="9" strokeWidth="1.8" strokeDasharray="2.35 2.36" />
                <path d="M8 6.8L13 10L8 13.2Z" fill="currentColor" stroke="none" />
              </svg>
            </OptionTools>
          </Options>
          <BackWindow>
            <FrontWindow>
              <TitleBar>
                <Title>Bay 05 / 07</Title>
                <WindowButtons>
                  <svg width="13" height="13" viewBox="0 0 13 13"><path d="M0.5 11.5H12.5" stroke="#fff" strokeWidth="1.6" /></svg>
                  <svg width="14" height="14" viewBox="0 0 14 14" fill="none" stroke="#fff" strokeWidth="1.3">
                    <rect x="1.2" y="4" width="9" height="8.6" rx="1" /><path d="M1 5.6H10.4" strokeWidth="2.4" /><path d="M3.6 3.8V1.4H12.8V10H10.6" />
                  </svg>
                  <svg width="14" height="14" viewBox="0 0 14 14"><path d="M1.5 1.5L12 12M12 1.5L1.5 12" stroke="#fff" strokeWidth="2.5" /></svg>
                </WindowButtons>
              </TitleBar>
              <PlanCard>
                <Grip width="8" height="6" viewBox="0 0 8 6"><path d="M0 1H8M0 3H8M0 5H8" stroke={BLUE} strokeWidth="1.1" strokeDasharray="2 1" /></Grip>
                <Tiers $w={107} $pl={54}><TierScale deck={DECK_TIERS} hold={HOLD_TIERS} /></Tiers>
                <BayPlan d={bay07} />
                <Middle>
                  <BayTitle>06</BayTitle>
                  <MidLabel $y={173}>H</MidLabel>
                  <MidLabel $y={184}>W</MidLabel>
                  <Tiers $w={175} $pt={65.4}>
                    <TierScale deck={[159, 438, 666, 672, 616]} hold={[279, 462, 410, 332, 244, 249, 211, 147]} />
                  </Tiers>
                  <MidLabel $y={395}>H</MidLabel>
                  <MidLabel $y={406}>W</MidLabel>
                </Middle>
                <BayPlan d={bay05} />
                <Tiers $w={26}><TierScale deck={DECK_TIERS} hold={HOLD_TIERS} /></Tiers>
              </PlanCard>
              <Footer>
                <AftButton><Chevron d="l" w={12} h={14} c={BLUE} sw={2.4} /></AftButton>
                Aft
                <ZoomTools>
                  <MdZoomIn size={23} color={BLUE} />
                  <MdZoomOut size={23} />
                  <svg width="17" height="17" viewBox="0 0 17 17"><path d="M0 2.2H17M0 8.5H17M0 14.8H17" stroke="currentColor" strokeWidth="4.2" strokeDasharray="4.4 1.9" /></svg>
                </ZoomTools>
                <PageSelect>5/7<Caret /></PageSelect>
                <Jump>Jump To TwinBay</Jump>
                <Forward>Forward<Chevron d="r" w={13} h={18} c={BLUE} sw={2.4} /></Forward>
              </Footer>
            </FrontWindow>
          </BackWindow>
          <Bottom>
            <Ports>
              <RoundArrow d="l" />
              <PortTrack>
                {ports.map(([name, c, fg], i) => (
                  <Port key={i} $c={c} $fg={fg} $sel={i === 9}>
                    {i === 9 && <Notch />}
                    {name}
                  </Port>
                ))}
              </PortTrack>
              <RoundArrow d="r" />
            </Ports>
            <Status>
              <StatusBox $w={325}><Stat $w={108}>FD 0m</Stat><Stat $w={110}>AD 0m</Stat><Stat $w={60}>MD 0m</Stat></StatusBox>
              <StatusBox $w={108}><Stat $w={80}>GM 0.00m</Stat></StatusBox>
              <StatusBox $w={217} $dark><Stat $w={72}>SF 0%</Stat><Stat $w={71}>BM 0%</Stat><Stat $w={60}>TM 0%</Stat></StatusBox>
              <StatusBox $w={217}><Stat $w={107}>LST 0.00</Stat><Stat $w={80} $dark>TRIM 0m</Stat></StatusBox>
              <StatusBox $w={326}><Stat $w={116}>DISP 118212.78t</Stat><Stat $w={107}>CARG 77969t</Stat><Stat $w={90}>Density 1.025</Stat></StatusBox>
            </Status>
          </Bottom>
        </Main>
      </Screen>
    </>
  );
}
